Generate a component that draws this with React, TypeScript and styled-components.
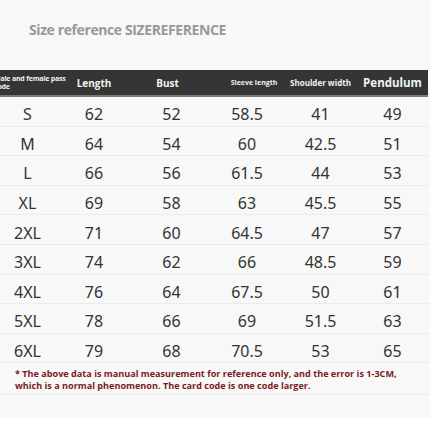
import React from "react";
import styled, { createGlobalStyle } from "styled-components";

const Global = createGlobalStyle`
  html, body { margin: 0; padding: 0; background: #ffffff; }
  #root { width: 430px; height: 430px; overflow: hidden; }
`;

const Page = styled.div`
  width: 430px;
  height: 430px;
  background: #ffffff;
  display: flex;
  flex-direction: column;
  overflow: hidden;
`;

const Sheet = styled.div`
  background: #f8f8f8;
  padding-top: 20px;
  height: 418px;
  box-sizing: border-box;
  display: flex;
  flex-direction: column;
`;

const Title = styled.h1`
  margin: 0 0 0 29px;
  font-family: "Open Sans", sans-serif;
  font-weight: 700;
  font-size: 14px;
  line-height: 20px;
  letter-spacing: -0.4px;
  color: #999999;
`;

const COLS = "55px 78px 77px 74px 73px 71px";

const HeaderRow = styled.div`
  margin-top: 30px;
  width: 428px;
  height: 25px;
  display: grid;
  grid-template-columns: ${COLS};
  align-items: center;
  background: #353535;
  border-bottom: 2px solid #7a7a7a;
`;

const HeadCell = styled.div<{ $size: number }>`
  font-family: "Open Sans", sans-serif;
  font-weight: 700;
  font-size: ${(p) => p.$size}px;
  color: #f2f2f2;
  text-align: center;
  white-space: nowrap;
`;

const Shift = styled.span<{ $dx: number }>`
  display: inline-block;
  transform: translateX(${(p) => p.$dx}px);
`;

const FirstHead = styled.div`
  height: 25px;
  display: flex;
  align-items: center;
`;

const FirstHeadText = styled.span`
  display: block;
  margin-left: -6px;
  width: 74px;
  flex: none;
  font-family: "Open Sans", sans-serif;
  font-weight: 700;
  font-size: 7px;
  line-height: 8px;
  letter-spacing: -0.2px;
  color: #f2f2f2;
`;

const Row = styled.div`
  display: grid;
  grid-template-columns: ${COLS};
  height: 29.6px;
  padding-top: 6px;
  align-items: center;
  border-bottom: 1px solid #ececec;
  box-sizing: border-box;
`;

const Cell = styled.div`
  font-family: "Noto Sans", sans-serif;
  font-weight: 400;
  font-size: 16px;
  line-height: 18px;
  color: #333333;
  text-align: center;
`;

const Note = styled.p`
  margin: 5px 0 0 15px;
  font-family: "Open Sans", sans-serif;
  font-weight: 700;
  font-size: 9.1px;
  line-height: 11.5px;
  color: #7a1a22;
`;

const Divider = styled.div`
  margin-top: 3px;
  height: 1px;
  background: #ececec;
`;

const rows = [
  ["S", "62", "52", "58.5", "41", "49"],
  ["M", "64", "54", "60", "42.5", "51"],
  ["L", "66", "56", "61.5", "44", "53"],
  ["XL", "69", "58", "63", "45.5", "55"],
  ["2XL", "71", "60", "64.5", "47", "57"],
  ["3XL", "74", "62", "66", "48.5", "59"],
  ["4XL", "76", "64", "67.5", "50", "61"],
  ["5XL", "78", "66", "69", "51.5", "63"],
  ["6XL", "79", "68", "70.5", "53", "65"],
];

export default function App() {
  return (
    <Page>
      <Global />
      <Sheet>
        <Title>Size reference SIZEREFERENCE</Title>
        <HeaderRow>
          <FirstHead>
            <FirstHeadText>Male and female pass code</FirstHeadText>
          </FirstHead>
          <HeadCell $size={10}>Length</HeadCell>
          <HeadCell $size={10}>
            <Shift $dx={-4}>Bust</Shift>
          </HeadCell>
          <HeadCell $size={7}>
            <Shift $dx={7}>Sleeve length</Shift>
          </HeadCell>
          <HeadCell $size={8}>Shoulder width</HeadCell>
          <HeadCell $size={11.5}>Pendulum</HeadCell>
        </HeaderRow>
        {rows.map((r) => (
          <Row key={r[0]}>
            {r.map((v, i) => (
              <Cell key={i}>{v}</Cell>
            ))}
          </Row>
        ))}
        <Note>
          * The above data is manual measurement for reference only, and the error is 1-3CM,
          <br />
          which is a normal phenomenon. The card code is one code larger.
        </Note>
        <Divider />
      </Sheet>
    </Page>
  );
}
